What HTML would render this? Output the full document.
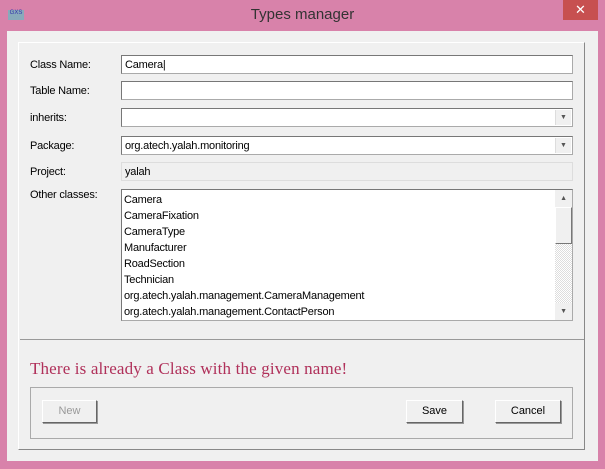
<!DOCTYPE html><html><head><style>
body{margin:0;width:605px;height:469px;background:#d882aa;position:relative;overflow:hidden;font-family:"Liberation Sans",sans-serif;font-size:11px;color:#000}
.a{position:absolute;box-sizing:border-box}
.lbl{position:absolute;left:30px;font-size:11px;letter-spacing:-0.2px}
.in{position:absolute;left:121px;width:452px;height:19px;background:#fff;border:1px solid #aaa;border-top-color:#777;border-left-color:#777;padding:3px 3px 0;box-sizing:border-box;font-size:11px;letter-spacing:-0.2px}
.dd{position:absolute;right:1px;top:1px;width:15px;height:15px;background:#f0f0f0;border-left:1px solid #ddd;font-size:7px;text-align:center;line-height:15px;color:#555;letter-spacing:0}
.btn{position:absolute;top:400px;height:23px;background:#f0f0f0;border:1px solid #fff;border-right-color:#666;border-bottom-color:#666;box-shadow:1px 1px 0 #999;text-align:center;line-height:21px;box-sizing:border-box}
</style></head><body>
<div class="a" style="left:8px;top:10px;width:16px;height:10px;background:#8ab;font-size:6px;color:#33a;text-align:center">GXS</div>
<div class="a" style="left:0;top:6px;width:605px;text-align:center;font-size:15px;color:#333">Types manager</div>
<div class="a" style="left:563px;top:0;width:35px;height:20px;background:#c75050;color:#fff;text-align:center;line-height:20px;font-size:13px">✕</div>
<div class="a" style="left:7px;top:31px;width:591px;height:430px;background:#f0f0f0"></div>
<div class="a" style="left:18px;top:42px;width:567px;height:408px;border:1px solid #fff;border-right-color:#888;border-bottom-color:#888"></div>
<div class="lbl" style="top:59px">Class Name:</div>
<div class="lbl" style="top:85px">Table Name:</div>
<div class="lbl" style="top:112px">inherits:</div>
<div class="lbl" style="top:140px">Package:</div>
<div class="lbl" style="top:166px">Project:</div>
<div class="lbl" style="top:189px">Other classes:</div>
<div class="in" style="top:55px">Camera|</div>
<div class="in" style="top:81px"></div>
<div class="in" style="top:108px"><div class="dd">▼</div></div>
<div class="in" style="top:136px">org.atech.yalah.monitoring<div class="dd">▼</div></div>
<div class="in" style="top:162px;background:#f0f0f0;border-color:#ddd">yalah</div>
<div class="a" style="left:121px;top:189px;width:452px;height:132px;background:#fff;border:1px solid #aaa;border-top-color:#777;border-left-color:#777;padding:2px 2px;line-height:16px;letter-spacing:-0.2px">
Camera<br>CameraFixation<br>CameraType<br>Manufacturer<br>RoadSection<br>Technician<br>org.atech.yalah.management.CameraManagement<br>org.atech.yalah.management.ContactPerson
<div class="a" style="right:0;top:0;width:17px;height:130px;background:repeating-conic-gradient(#ddd 0 25%,#fff 0 50%) 0 0/2px 2px"></div>
<div class="a" style="right:0;top:0;width:17px;height:17px;background:#f0f0f0;font-size:7px;text-align:center;line-height:17px;color:#555">▲</div>
<div class="a" style="right:0;top:17px;width:17px;height:37px;background:#f0f0f0;border:1px solid #fff;border-right-color:#777;border-bottom-color:#777"></div>
<div class="a" style="right:0;top:113px;width:17px;height:17px;background:#f0f0f0;font-size:7px;text-align:center;line-height:17px;color:#555">▼</div>
</div>
<div class="a" style="left:20px;top:339px;width:564px;height:1px;background:#999"></div>
<div class="a" style="left:30px;top:359px;font-family:'Liberation Serif',serif;font-size:17px;color:#b0305a;letter-spacing:0.15px">There is already a Class with the given name!</div>
<div class="a" style="left:30px;top:387px;width:543px;height:52px;border:1px solid #aaa"></div>
<div class="btn" style="left:42px;width:55px;color:#999">New</div>
<div class="btn" style="left:406px;width:57px">Save</div>
<div class="btn" style="left:495px;width:66px">Cancel</div>
</body></html>
